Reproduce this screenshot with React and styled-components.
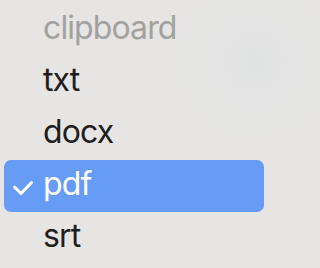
import React from "react";
import styled, { createGlobalStyle } from "styled-components";

const Global = createGlobalStyle`
  html, body { margin: 0; padding: 0; }
  body {
    width: 268px;
    height: 268px;
    overflow: hidden;
    background:
      radial-gradient(circle at 255px 62px, #e1e3e2 0px, #e3e4e3 40px, rgba(230,229,227,0) 85px),
      #e6e5e3;
    font-family: Inter, "Noto Sans", "Liberation Sans", sans-serif;
    -webkit-font-smoothing: antialiased;
  }
`;

const Menu = styled.div`
  display: flex;
  flex-direction: column;
  padding: 4px 4px;
`;

const Row = styled.div`
  display: flex;
  align-items: stretch;
  height: 52px;
  border-radius: 7px;
  background: ${(p) => (p.$selected ? "#669cf6" : "transparent")};
  color: ${(p) => (p.$selected ? "#ffffff" : p.$disabled ? "#a1a1a0" : "#1e1e1e")};
`;

const CheckSlot = styled.div`
  flex: none;
  width: 39px;
  display: flex;
  align-items: center;
`;

const Label = styled.span`
  font-size: 32px;
  line-height: 52px;
  letter-spacing: -0.9px;
  transform: translateY(-2px);
`;

const Check = () => (
  <svg width="39" height="52" viewBox="0 0 39 52">
    <polyline
      points="10.5,27 17,33.5 27.5,22.5"
      fill="none"
      stroke="#ffffff"
      strokeWidth="3"
      strokeLinecap="round"
      strokeLinejoin="round"
    />
  </svg>
);

const items = [
  { label: "clipboard", disabled: true },
  { label: "txt" },
  { label: "docx" },
  { label: "pdf", selected: true },
  { label: "srt" },
];

export default function App() {
  return (
    <>
      <Global />
      <Menu>
        {items.map((it) => (
          <Row key={it.label} $selected={it.selected} $disabled={it.disabled}>
            <CheckSlot>{it.selected && <Check />}</CheckSlot>
            <Label>{it.label}</Label>
          </Row>
        ))}
      </Menu>
    </>
  );
}
